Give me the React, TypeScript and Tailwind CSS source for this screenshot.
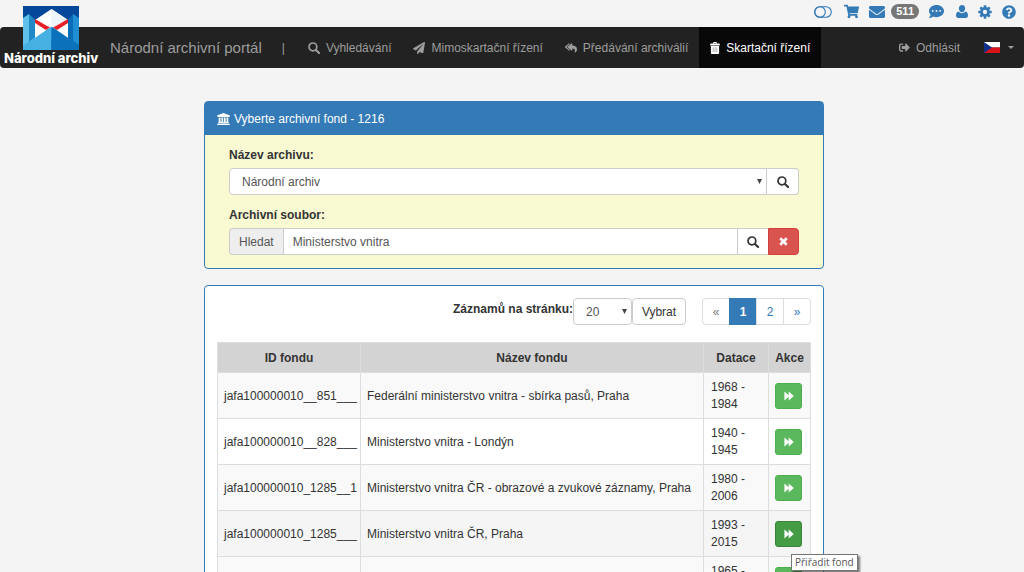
import React from 'react'
import clsx from 'clsx'
import {
  FaCommentDots,
  FaEnvelope,
  FaPaperPlane,
  FaReplyAll,
  FaShoppingCart,
  FaQuestionCircle,
  FaSignOutAlt,
} from 'react-icons/fa'

interface IconProps {
  className?: string
}

interface Fond {
  id: string
  name: string
  dates: string
  active?: boolean
}

const fonds: Fond[] = [
  { id: 'jafa100000010__851___', name: 'Federální ministerstvo vnitra - sbírka pasů, Praha', dates: '1968 - 1984' },
  { id: 'jafa100000010__828___', name: 'Ministerstvo vnitra - Londýn', dates: '1940 - 1945' },
  { id: 'jafa100000010_1285__1', name: 'Ministerstvo vnitra ČR - obrazové a zvukové záznamy, Praha', dates: '1980 - 2006' },
  { id: 'jafa100000010_1285___', name: 'Ministerstvo vnitra ČR, Praha', dates: '1993 - 2015', active: true },
  { id: '', name: '', dates: '1965 - 1968' },
]

const SearchIcon = ({ className }: IconProps) => (
  <svg className={className} viewBox="0 0 12 12" fill="none" stroke="currentColor" aria-hidden="true">
    <circle cx="4.9" cy="4.9" r="3.9" strokeWidth="1.7" />
    <path d="M7.9 7.9l3.2 3.2" strokeWidth="2.1" strokeLinecap="round" />
  </svg>
)

const TrashIcon = ({ className }: IconProps) => (
  <svg className={className} viewBox="0 0 10 12" fill="currentColor" aria-hidden="true">
    <path d="M3.2 1.6V.6Q3.2 0 3.8 0h2.4q.6 0 .6.6v1h2.4q.6 0 .6.6V3.4H.2V2.2q0-.6.6-.6zM4.1.9v.7h1.8V.9z" fillRule="evenodd" />
    <path d="M.9 4h8.2v7.2q0 .8-.8.8H1.7q-.8 0-.8-.8z" />
    <path d="M3.2 5.3v5M5 5.3v5M6.8 5.3v5" stroke="#8a938a" strokeWidth=".7" />
  </svg>
)

const ToggleIcon = ({ className }: IconProps) => (
  <svg className={className} viewBox="0 0 18 12" fill="none" stroke="currentColor" strokeWidth="1.1" aria-hidden="true">
    <rect x=".7" y=".7" width="16.6" height="10.6" rx="5.3" />
    <circle cx="6" cy="6" r="5.3" />
  </svg>
)

const UserIcon = ({ className }: IconProps) => (
  <svg className={className} viewBox="0 0 12 13" fill="currentColor" aria-hidden="true">
    <path d="M6 0c2 0 3.1 1.5 3.1 3.5C9.1 5.3 8 7.3 6 7.3S2.9 5.3 2.9 3.5C2.9 1.5 4 0 6 0z" />
    <path d="M2.7 6.6C3.5 7.7 4.6 8.3 6 8.3s2.5-.6 3.3-1.7C11.2 6.9 12 8.5 12 10.6 12 12 11.2 13 9.9 13H2.1C.8 13 0 12 0 10.6 0 8.5.8 6.9 2.7 6.6z" />
  </svg>
)

const CogIcon = ({ className }: IconProps) => (
  <svg className={className} viewBox="-7 -7 14 14" fill="none" stroke="currentColor" aria-hidden="true">
    <circle r="3.6" strokeWidth="2.9" />
    <path d="M0-6.7v2.4M0 6.7V4.3M-6.7 0h2.4M6.7 0H4.3M-4.7-4.7l1.7 1.7M4.7 4.7L3 3M-4.7 4.7L-3 3M4.7-4.7L3-3" strokeWidth="2.5" />
  </svg>
)

const BankIcon = ({ className }: IconProps) => (
  <svg className={className} viewBox="0 0 13 12" fill="currentColor" aria-hidden="true">
    <path d="M6.5 0L13 2.6v.9h-.8v.5H.8v-.5H0v-.9z" />
    <path d="M1.7 4.4h1.8v4.8h.9V4.4h1.7v4.8h.8V4.4h1.7v4.8h.9V4.4h1.8v4.8h.5v.8H1.2v-.8h.5zM.8 10.4h11.4v.8h.8v.8H0v-.8h.8z" />
  </svg>
)

const CrossIcon = ({ className }: IconProps) => (
  <svg className={className} viewBox="0 0 10 10" stroke="currentColor" strokeWidth="3" aria-hidden="true">
    <path d="M1.4 1.4l7.2 7.2M8.6 1.4L1.4 8.6" />
  </svg>
)

const ForwardIcon = ({ className }: IconProps) => (
  <svg className={className} viewBox="0 0 10 10" fill="currentColor" aria-hidden="true">
    <path d="M.4.6L4.7 4.3V.6L9.8 5 4.7 9.4V5.7L.4 9.4z" />
  </svg>
)

const FlagIcon = ({ className }: IconProps) => (
  <svg className={className} viewBox="0 0 16 11" aria-hidden="true">
    <path d="M0 0h16v5.5H0z" fill="#fff" />
    <path d="M0 5.5h16V11H0z" fill="#d7141a" />
    <path d="M0 0l8 5.5L0 11z" fill="#11308c" />
  </svg>
)

const ArchiveLogo = ({ className }: IconProps) => (
  <svg className={className} viewBox="0 0 56 44" aria-hidden="true">
    <path d="M0 0h56v44H0z" fill="#05489a" />
    <path d="M0 12l6-4v36H0z" fill="#5fc0ea" />
    <path d="M6 8l6 6v18l-6 4z" fill="#2088c5" />
    <path d="M45 14l5-6v30l-5-5z" fill="#0a6cb6" />
    <path d="M50 8l6 4v32h-6z" fill="#1f8fd2" />
    <path d="M0 40l12-9 16.5-11v24H0z" fill="#45b0e2" />
    <path d="M28.5 20L45 31l11 8v5H28.5z" fill="#0972bb" />
    <path d="M28.5 3L45 14v18L28.5 21 12 32V14z" fill="#fff" />
    <path d="M28.5 3L45 14l-16.5 8z" fill="#edf4fa" />
    <path d="M12 13l13 7.5h7L45 13v4l-11 7-5.5-3.5L23 24l-11-7z" fill="#e81f27" />
    <path d="M25.5 20.5l3-2 3 2-3 2z" fill="#fff" />
    <path d="M28.5 20.5L12 32v2h16.5z" fill="#45b0e2" />
    <path d="M28.5 20.5L45 32v2H28.5z" fill="#0972bb" />
  </svg>
)

const navItems = [
  { label: 'Vyhledávání', icon: <SearchIcon className="size-3" /> },
  { label: 'Mimoskartační řízení', icon: <FaPaperPlane className="size-3" /> },
  { label: 'Předávání archiválií', icon: <FaReplyAll className="size-3" /> },
  { label: 'Skartační řízení', icon: <TrashIcon className="h-3 w-[10px]" />, active: true },
]

const Toolbar = () => (
  <div className="flex h-[27px] items-center justify-end pr-2 pb-1 text-[#337ab7]">
    <a href="#kontrast" aria-label="Kontrast"><ToggleIcon className="h-3 w-[18px]" /></a>
    <a href="#kosik" aria-label="Košík" className="ml-3"><FaShoppingCart className="size-[15px]" /></a>
    <a href="#zpravy" aria-label="Zprávy" className="ml-2.5 flex items-center gap-1.5">
      <FaEnvelope className="size-4" />
      <span className="rounded-full bg-[#777] px-[5px] text-[11px] leading-[15px] font-bold text-white">511</span>
    </a>
    <a href="#chat" aria-label="Chat" className="ml-2.5"><FaCommentDots className="size-[15px]" /></a>
    <a href="#profil" aria-label="Profil" className="ml-3"><UserIcon className="h-[13px] w-3" /></a>
    <a href="#nastaveni" aria-label="Nastavení" className="ml-2.5"><CogIcon className="size-[14px]" /></a>
    <a href="#napoveda" aria-label="Nápověda" className="ml-2.5"><FaQuestionCircle className="size-[14px]" /></a>
  </div>
)

const Navbar = () => (
  <nav className="relative flex h-[41px] items-stretch rounded bg-[#222] pl-[110px] text-xs text-[#9d9d9d]">
    <a href="#domu" className="absolute bottom-0.5 left-1 flex flex-col items-center text-white">
      <ArchiveLogo className="h-11 w-14" />
      <span className="font-[Inter,sans-serif] text-[13px] leading-4 font-extrabold whitespace-nowrap">Národní archiv</span>
    </a>
    <a href="#portal" className="flex items-center text-[15px] whitespace-nowrap">Národní archivní portál</a>
    <span className="flex items-center pr-3 pl-5">|</span>
    {navItems.map((item) => (
      <a
        key={item.label}
        href="#nav"
        className={clsx(
          'flex items-center gap-1.5 px-[11px] whitespace-nowrap',
          item.active && 'bg-[#080808] text-white'
        )}
      >
        {item.icon}
        {item.label}
      </a>
    ))}
    <a href="#odhlasit" className="ml-auto flex items-center gap-1.5 px-3">
      <FaSignOutAlt className="size-[11px]" />
      Odhlásit
    </a>
    <button type="button" aria-label="Jazyk" className="flex items-center gap-2 pr-2.5 pl-3">
      <FlagIcon className="h-[11px] w-4" />
      <svg className="h-[3px] w-1.5" viewBox="0 0 6 3" fill="currentColor" aria-hidden="true"><path d="M0 0h6L3 3z" /></svg>
    </button>
  </nav>
)

const Caret = () => (
  <svg className="pointer-events-none absolute right-[5px] h-[5px] w-[5px]" viewBox="0 0 5 5" fill="#444" aria-hidden="true">
    <path d="M0 0h5L2.5 5z" />
  </svg>
)

const SearchPanel = () => (
  <section className="rounded border border-[#337ab7] bg-[#f9f9d2]">
    <h1 className="flex h-[33px] items-center gap-1 bg-[#337ab7] px-3 text-xs text-white">
      <BankIcon className="h-3 w-[13px]" />
      Vyberte archivní fond - 1216
    </h1>
    <form className="px-6 pt-3 pb-[13px]">
      <label htmlFor="archive" className="mb-1 block leading-[17px] font-bold text-[#333]">Název archivu:</label>
      <div className="flex h-[27px]">
        <div className="relative flex flex-1 items-center">
          <select id="archive" className="h-full w-full appearance-none rounded-l border border-[#ccc] bg-white px-3">
            <option>Národní archiv</option>
          </select>
          <Caret />
        </div>
        <button type="button" aria-label="Hledat archiv" className="flex w-8 items-center justify-center rounded-r border border-l-0 border-[#ccc] bg-white text-[#333]">
          <SearchIcon className="size-3" />
        </button>
      </div>
      <label htmlFor="collection" className="mt-3 mb-1 block leading-[17px] font-bold text-[#333]">Archivní soubor:</label>
      <div className="flex h-[27px]">
        <span className="flex items-center rounded-l border border-r-0 border-[#ccc] bg-[#eee] px-[9px]">Hledat</span>
        <input id="collection" type="text" defaultValue="Ministerstvo vnitra" className="min-w-0 flex-1 border border-[#ccc] bg-white px-[9px]" />
        <button type="button" aria-label="Hledat soubor" className="flex w-[30px] items-center justify-center border-y border-[#ccc] bg-white text-[#333]">
          <SearchIcon className="size-3" />
        </button>
        <button type="button" aria-label="Zrušit" className="flex w-[31px] items-center justify-center rounded-r border border-[#d43f3a] bg-[#d9534f] text-white">
          <CrossIcon className="size-[9px]" />
        </button>
      </div>
    </form>
  </section>
)

const pageClass = 'flex h-[27px] w-7 items-center justify-center border border-[#ddd]'

const ResultsPanel = () => (
  <section className="mt-4 rounded border border-[#337ab7] bg-white p-3">
    <div className="flex justify-end">
      <label htmlFor="page-size" className="pt-[3px] leading-[17px] font-bold text-[#333]">Záznamů na stránku:</label>
      <div className="relative flex h-[27px] w-[59px] items-center">
        <select id="page-size" className="h-full w-full appearance-none rounded border border-[#ccc] bg-white px-3">
          <option>20</option>
        </select>
        <Caret />
      </div>
      <button type="button" className="h-[27px] w-[54px] rounded border border-[#ccc] bg-white text-[#333]">Vybrat</button>
      <div className="ml-4 flex -space-x-px text-[#337ab7]">
        <a href="#prev" className={clsx(pageClass, 'rounded-l text-[#777]')}>«</a>
        <a href="#1" className="flex h-[27px] w-7 items-center justify-center border border-[#337ab7] bg-[#337ab7] font-bold text-white">1</a>
        <a href="#2" className={pageClass}>2</a>
        <a href="#next" className={clsx(pageClass, 'rounded-r')}>»</a>
      </div>
    </div>
    <table className="mt-[17px] w-full border-collapse text-[#333]">
      <thead>
        <tr className="h-[30px] bg-[#d3d3d3]">
          <th className="w-[143px] border border-[#ddd] p-0">ID fondu</th>
          <th className="border border-[#ddd] p-0">Název fondu</th>
          <th className="w-[65px] border border-[#ddd] p-0">Datace</th>
          <th className="w-[42px] border border-[#ddd] p-0">Akce</th>
        </tr>
      </thead>
      <tbody>
        {fonds.map((fond) => (
          <tr key={fond.dates} className={clsx('h-[46px]', fond.active ? 'bg-[#f5f5f5]' : 'odd:bg-[#f9f9f9]')}>
            <td className="border border-[#ddd] pr-[3px] pl-1.5 whitespace-nowrap">{fond.id}</td>
            <td className="border border-[#ddd] pr-[3px] pl-1.5">{fond.name}</td>
            <td className="border border-[#ddd] pr-[3px] pl-[7px] leading-[17px]">{fond.dates}</td>
            <td className="border border-[#ddd] pr-[3px] pl-1.5">
              <div className="relative">
                <button
                  type="button"
                  aria-label="Přiřadit fond"
                  className={clsx(
                    'flex h-[26px] w-[27px] items-center justify-center rounded-[3px] border text-white',
                    fond.active ? 'border-[#398439] bg-[#449d44]' : 'border-[#4cae4c] bg-[#5cb85c]'
                  )}
                >
                  <ForwardIcon className="size-[10px]" />
                </button>
                {fond.active && (
                  <span
                    role="tooltip"
                    className="absolute top-[33px] left-4 z-10 border border-[#767676] bg-white px-[3px] font-['Open_Sans',sans-serif] text-[10px] leading-[15px] whitespace-nowrap text-[#575757] shadow-[2px_2px_2px_rgba(0,0,0,0.5)]"
                  >
                    Přiřadit fond
                  </span>
                )}
              </div>
            </td>
          </tr>
        ))}
      </tbody>
    </table>
  </section>
)

const App: React.FC = () => {
  return (
    <div className="h-screen overflow-hidden bg-[#f4f4f4] font-['Liberation_Sans',Arial,sans-serif] text-xs text-[#555]">
      <header>
        <Toolbar />
        <Navbar />
      </header>
      <main className="pt-[33px] pl-1">
        <div className="mx-auto max-w-[620px]">
          <SearchPanel />
          <ResultsPanel />
        </div>
      </main>
    </div>
  )
}

export default App
